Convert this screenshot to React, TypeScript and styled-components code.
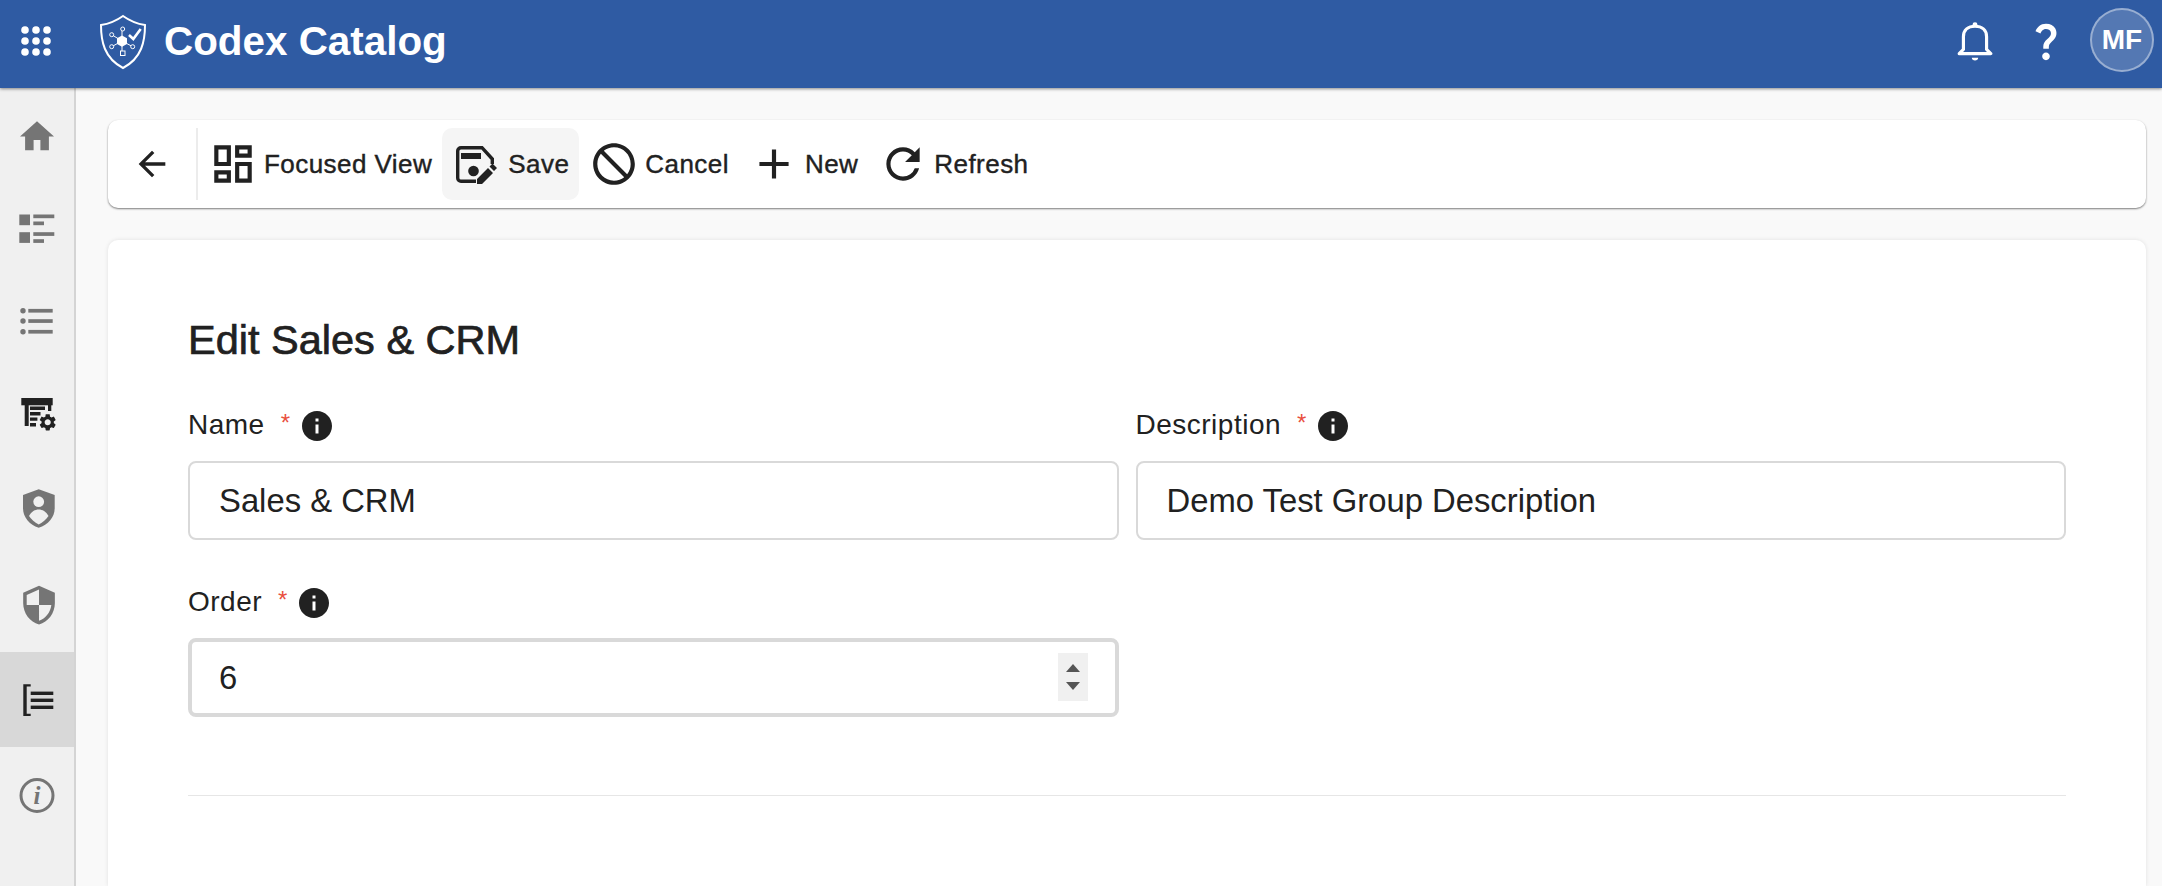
import React from "react";
import styled, { createGlobalStyle } from "styled-components";
import {
  MdAdd,
  MdArrowBack,
  MdBlock,
  MdInfo,
  MdOutlineDashboard,
  MdQuestionMark,
  MdRefresh,
} from "react-icons/md";

const GlobalStyle = createGlobalStyle`
  html, body {
    margin: 0;
    height: 100%;
    overflow: hidden;
    background: #f9f9f9;
    font-family: "Liberation Sans", Arial, sans-serif;
    color: #212121;
  }
  * { box-sizing: border-box; }
`;

const Page = styled.div`
  display: flex;
  flex-direction: column;
  height: 100vh;
`;

const Header = styled.header`
  position: relative;
  z-index: 2;
  flex: 0 0 88px;
  display: flex;
  align-items: center;
  padding: 0 8px 6px 21px;
  background: #2f5ba3;
  color: #fff;
  box-shadow: 0 1px 3px rgba(0, 0, 0, 0.45);
`;

const Logo = styled.svg`
  width: 70px;
  height: 66px;
  margin-left: 39px;
  margin-top: 1px;
`;

const Brand = styled.div`
  margin-left: 4px;
  font-size: 40.4px;
  font-weight: 700;
  line-height: 1;
`;

const HeaderActions = styled.div`
  margin-left: auto;
  display: flex;
  align-items: center;
`;

const Bell = styled.svg`
  width: 36px;
  height: 40px;
  margin-right: 30px;
`;

const Avatar = styled.div`
  width: 64px;
  height: 64px;
  margin-left: 21px;
  margin-top: -2px;
  display: flex;
  align-items: center;
  justify-content: center;
  border-radius: 50%;
  border: 2px solid rgba(255, 255, 255, 0.4);
  background: rgba(255, 255, 255, 0.18);
  font-size: 28px;
  font-weight: 700;
`;

const Body = styled.div`
  flex: 1;
  display: flex;
  min-height: 0;
`;

const Sidebar = styled.nav`
  flex: 0 0 76px;
  margin-top: -3px;
  background: #f0f0f0;
  border-right: 2px solid #d4d4d4;
`;

const SideItem = styled.div<{ $active?: boolean }>`
  height: 94.5px;
  display: flex;
  align-items: center;
  background: ${(p) => (p.$active ? "#d8d8d8" : "transparent")};
`;

const SideIcon = styled.svg`
  width: 74px;
  height: 60px;
  display: block;
`;

const Main = styled.main`
  flex: 1;
  min-width: 0;
  display: flex;
  flex-direction: column;
  gap: 32px;
  padding: 32px 16px 0 32px;
`;

const Toolbar = styled.div`
  flex: 0 0 88px;
  display: flex;
  align-items: center;
  background: #fff;
  border-radius: 10px;
  box-shadow: 0 1px 2px rgba(0, 0, 0, 0.5);
`;

const BackButton = styled.div`
  width: 90px;
  height: 72px;
  display: flex;
  align-items: center;
  justify-content: center;
  border-right: 2px solid #ececec;
`;

const ToolButton = styled.div<{ $hover?: boolean }>`
  height: 72px;
  display: flex;
  align-items: center;
  gap: 6px;
  padding: 0 10px;
  border-radius: 10px;
  font-size: 26px;
  letter-spacing: 0.45px;
  -webkit-text-stroke: 0.4px #212121;
  background: ${(p) => (p.$hover ? "#f5f5f5" : "transparent")};
`;

const BlockIcon = styled(MdBlock)`
  transform: scaleX(-1);
`;

const Card = styled.section`
  flex: 1;
  padding: 76px 80px 0;
  background: #fff;
  border-radius: 10px 10px 0 0;
  box-shadow: 0 0 4px rgba(0, 0, 0, 0.1);
`;

const Title = styled.h1`
  margin: 0 0 46.5px;
  font-size: 41.5px;
  line-height: 48px;
  font-weight: 400;
  -webkit-text-stroke: 0.7px #212121;
`;

const FormGrid = styled.div`
  display: grid;
  grid-template-columns: 1fr 1fr;
  column-gap: 17px;
  row-gap: 48px;
`;

const LabelRow = styled.div`
  height: 30px;
  margin-bottom: 20px;
  display: flex;
  align-items: center;
  font-size: 28px;
  letter-spacing: 0.5px;
`;

const LabelText = styled.span`
  padding-bottom: 2px;
`;

const Required = styled.span`
  align-self: flex-start;
  margin-left: 16px;
  width: 11px;
  font-size: 24px;
  line-height: 24px;
  color: #e9503f;
`;

const InfoBadge = styled(MdInfo)`
  margin: 0 -3px 0 7px;
  color: #212121;
`;

const InputBox = styled.div<{ $focused?: boolean }>`
  height: 79px;
  display: flex;
  align-items: center;
  padding: 0 ${(p) => (p.$focused ? "27px" : "30px")} 0 ${(p) => (p.$focused ? "27px" : "29px")};
  background: #fff;
  border: ${(p) => (p.$focused ? "4px" : "2px")} solid #d9d9d9;
  border-radius: 8px;
`;

const TextInput = styled.input`
  flex: 1;
  min-width: 0;
  padding: 2px 0 0;
  border: 0;
  outline: 0;
  background: transparent;
  color: #212121;
  font-family: inherit;
  font-size: 32.8px;
`;

const Spinner = styled.div`
  width: 30px;
  height: 48px;
  display: flex;
  flex-direction: column;
  align-items: center;
  justify-content: space-evenly;
  background: #f0f0f0;
`;

const SpinArrow = styled.span<{ $down?: boolean }>`
  width: 0;
  height: 0;
  border-left: 7px solid transparent;
  border-right: 7px solid transparent;
  ${(p) => (p.$down ? "border-top: 8px solid #555;" : "border-bottom: 8px solid #555;")}
`;

const Rule = styled.hr`
  margin: 78px 0 0;
  border: 0;
  border-top: 1px solid #e6e6e6;
`;

const GREY = "#757575";
const INK = "#212121";

const navIcons = [
  <g fill={GREY}>
    <path transform="translate(16.6 14.15) scale(1.7)" d="M10 20v-6h4v6h5v-8h3L12 3 2 12h3v8z" />
  </g>,
  <g fill={GREY} transform="translate(0 -1)">
    <rect x="19.3" y="18.5" width="10.7" height="10.7" />
    <rect x="33.3" y="18.5" width="21" height="3.7" />
    <rect x="33.3" y="25.5" width="10.7" height="3.7" />
    <rect x="19.3" y="36.2" width="10.7" height="10.7" />
    <rect x="33.3" y="36.2" width="21" height="3.7" />
    <rect x="33.3" y="43.2" width="10.7" height="3.7" />
  </g>,
  <g fill={GREY}>
    <circle cx="23" cy="19.7" r="2.7" />
    <circle cx="23" cy="30" r="2.7" />
    <circle cx="23" cy="40.7" r="2.7" />
    <rect x="28.3" y="17.9" width="24.4" height="3.7" />
    <rect x="28.3" y="28.2" width="24.4" height="3.7" />
    <rect x="28.3" y="38.9" width="24.4" height="3.7" />
  </g>,
  <g fill={INK} transform="translate(12 2)">
    <rect x="9.3" y="10" width="31.4" height="7.3" />
    <rect x="12.7" y="17" width="4" height="21" />
    <rect x="36" y="17" width="3.3" height="6" />
    <path d="M18 18.5h15v3.4H18zM18 24h10.5v3.4H18zM18 29.4h7.4v3.4H18zM18 35h6v3.4h-6z" />
    <path
      transform="translate(25.5 24.1) scale(.85)"
      d="M19.14 12.94c.04-.3.06-.61.06-.94 0-.32-.02-.64-.07-.94l2.03-1.58c.18-.14.23-.41.12-.61l-1.92-3.32c-.12-.22-.37-.29-.59-.22l-2.39.96c-.5-.38-1.03-.7-1.62-.94l-.36-2.54c-.04-.24-.24-.41-.48-.41h-3.84c-.24 0-.43.17-.47.41l-.36 2.54c-.59.24-1.13.57-1.62.94l-2.39-.96c-.22-.08-.47 0-.59.22L2.74 8.87c-.12.21-.08.47.12.61l2.03 1.58c-.05.3-.09.63-.09.94s.02.64.07.94l-2.03 1.58c-.18.14-.23.41-.12.61l1.92 3.32c.12.22.37.29.59.22l2.39-.96c.5.38 1.03.7 1.62.94l.36 2.54c.05.24.24.41.48.41h3.84c.24 0 .44-.17.47-.41l.36-2.54c.59-.24 1.13-.56 1.62-.94l2.39.96c.22.08.47 0 .59-.22l1.92-3.32c.12-.22.07-.47-.12-.61l-2.01-1.58zM12 15.6c-1.98 0-3.6-1.62-3.6-3.6s1.62-3.6 3.6-3.6 3.6 1.62 3.6 3.6-1.62 3.6-3.6 3.6z"
    />
  </g>,
  <g transform="translate(12 0)">
    <path fill={GREY} d="M26.7 9.3 11 15v13c0 9.5 6.5 16.7 15.7 19.7C36 44.7 42.7 37.5 42.7 28V15z" />
    <circle cx="26.7" cy="21.7" r="5.4" fill="#f0f0f0" />
    <path
      fill="#f0f0f0"
      d="M17 36c2.5-4.5 6-6.5 9.7-6.5s7.3 2 9.8 6.5c-2.5 3.5-5.5 6.5-9.8 8.5-4.2-2-7.2-5-9.7-8.5z"
    />
  </g>,
  <g fill={GREY} transform="translate(17.9 8.9) scale(1.76)">
    <path d="M12 1 3 5v6c0 5.55 3.84 10.74 9 12 5.16-1.26 9-6.45 9-12V5l-9-4zm0 10.99h7c-.53 4.12-3.28 7.79-7 8.94V12H5V6.3l7-3.11v8.8z" />
  </g>,
  <g fill={INK}>
    <path d="M23.3 15.3h7.4v2.2h-4V44.8h4V47h-7.4z" />
    <rect x="30.7" y="22.6" width="22.6" height="3.4" />
    <rect x="30.7" y="29.6" width="22.6" height="3.4" />
    <rect x="30.7" y="36.6" width="22.6" height="3.4" />
  </g>,
  <g>
    <circle cx="37" cy="31.5" r="16" fill="none" stroke={GREY} strokeWidth="3" />
    <text x="37" y="40" textAnchor="middle" fontFamily="Liberation Serif, serif" fontStyle="italic" fontWeight="700" fontSize="25" fill={GREY}>
      i
    </text>
  </g>,
];

const SaveIcon: React.FC = () => (
  <svg width="50" height="50" viewBox="0 0 50 50" fill={INK}>
    <path
      d="M24 42.3H9A3.3 3.3 0 0 1 5.7 39V12A3.3 3.3 0 0 1 9 8.7h21L40.3 20v5"
      fill="none"
      stroke={INK}
      strokeWidth="3.4"
    />
    <rect x="9" y="14" width="20" height="6" />
    <circle cx="21.5" cy="32" r="5.3" />
    <path d="M25 45v-5l11-11 5 5-11 11zM37.5 27.5l3-3 4.5 4.5-3 3z" />
  </svg>
);

type FieldProps = { label: string; value: string; focused?: boolean };

const Field: React.FC<FieldProps> = ({ label, value, focused }) => (
  <div>
    <LabelRow>
      <LabelText>{label}</LabelText>
      <Required>*</Required>
      <InfoBadge size={36} />
    </LabelRow>
    <InputBox $focused={focused}>
      <TextInput value={value} readOnly />
      {focused && (
        <Spinner>
          <SpinArrow />
          <SpinArrow $down />
        </Spinner>
      )}
    </InputBox>
  </div>
);

const App: React.FC = () => {
  return (
    <Page>
      <GlobalStyle />
      <Header>
        <svg width="30" height="32" viewBox="0 0 30 32" fill="#fff">
          {[4, 15, 26].map((cy) =>
            [4, 15, 26].map((cx) => <circle key={`${cx}-${cy}`} cx={cx} cy={cy + 1} r="3.8" />)
          )}
        </svg>
        <Logo viewBox="0 0 70 66">
          <path
            d="M33 7C26 12 18 15 11 16c0 16 3 33 22 43 19-10 22-27 22-43-7-1-15-4-22-9z"
            fill="none"
            stroke="#fff"
            strokeWidth="2"
          />
          <g stroke="#fff" strokeWidth="1" fill="none">
            <path d="M32 32 21.7 25.7M32 32 21.7 37.7M32 32V44M32 32 42.7 37.7M32 32V20" />
            <circle cx="21.7" cy="25.7" r="2" fill="#2f5ba3" />
            <circle cx="21.7" cy="37.7" r="2" fill="#2f5ba3" />
            <circle cx="42.7" cy="37.7" r="2" fill="#2f5ba3" />
            <circle cx="32.7" cy="20" r="2" fill="#2f5ba3" />
            <rect x="30.5" y="42" width="4.5" height="4.5" fill="#2f5ba3" />
          </g>
          <path d="M32 26.5 37 29.3v5.6L32 37.7 27 34.9v-5.6z" fill="#fff" />
          <path d="M39 26l4.3 4 7.4-10" fill="none" stroke="#fff" strokeWidth="2.6" />
        </Logo>
        <Brand>Codex Catalog</Brand>
        <HeaderActions>
          <Bell viewBox="0 0 34 38" fill="none" stroke="#fff" strokeWidth="3">
            <path d="M6 27V15C6 8.5 10.5 5 17 5s11 3.5 11 10v12l4 4H2z" strokeLinejoin="round" />
            <circle cx="17" cy="3.5" r="1.6" fill="#fff" strokeWidth="1.5" />
            <path d="M14 35h6c0 1.7-1.3 2.5-3 2.5S14 36.7 14 35z" fill="#fff" stroke="none" />
          </Bell>
          <MdQuestionMark size={46} color="#fff" />
          <Avatar>MF</Avatar>
        </HeaderActions>
      </Header>
      <Body>
        <Sidebar>
          {navIcons.map((icon, i) => (
            <SideItem key={i} $active={i === 6}>
              <SideIcon viewBox="0 0 74 60">{icon}</SideIcon>
            </SideItem>
          ))}
        </Sidebar>
        <Main>
          <Toolbar>
            <BackButton>
              <MdArrowBack size={40} color={INK} />
            </BackButton>
            <ToolButton>
              <MdOutlineDashboard size={50} color={INK} />
              Focused View
            </ToolButton>
            <ToolButton $hover>
              <SaveIcon />
              Save
            </ToolButton>
            <ToolButton>
              <BlockIcon size={50} color={INK} />
              Cancel
            </ToolButton>
            <ToolButton>
              <MdAdd size={50} color={INK} />
              New
            </ToolButton>
            <ToolButton>
              <MdRefresh size={50} color={INK} />
              Refresh
            </ToolButton>
          </Toolbar>
          <Card>
            <Title>Edit Sales &amp; CRM</Title>
            <FormGrid>
              <Field label="Name" value="Sales & CRM" />
              <Field label="Description" value="Demo Test Group Description" />
              <Field label="Order" value="6" focused />
            </FormGrid>
            <Rule />
          </Card>
        </Main>
      </Body>
    </Page>
  );
};

export default App;
